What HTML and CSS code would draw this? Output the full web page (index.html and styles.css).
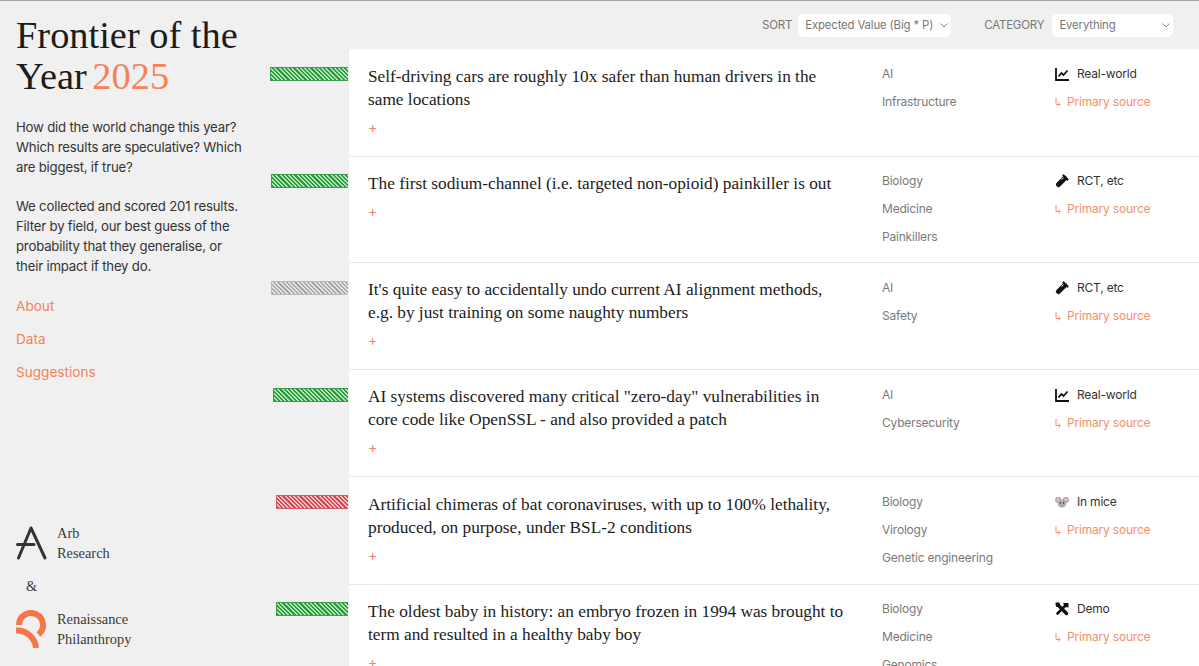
FILE: index.html
```html
<!DOCTYPE html>
<html lang="en">
<head>
    <meta charset="UTF-8">
    <meta name="viewport" content="width=device-width, initial-scale=1.0">
    <title>Frontier of the Year 2025</title>
    <link rel="stylesheet" href="styles.css">
</head>
<body>
    <div class="page">
        <aside class="sidebar">
            <h1 class="title">Frontier of the Year <span class="year">2025</span></h1>
            <p class="intro">How did the world change this year? Which results are speculative? Which are biggest, if true?</p>
            <p class="intro">We collected and scored 201 results. Filter by field, our best guess of the probability that they generalise, or their impact if they do.</p>
            <nav class="links">
                <a href="#">About</a>
                <a href="#">Data</a>
                <a href="#">Suggestions</a>
            </nav>
            <div class="credits">
                <div class="credit">
                    <svg class="logo" width="31" height="34" viewBox="0 0 31 34">
                        <path d="M2.5 32 L15 2 L29 32 M1.5 18.5 H18" fill="none" stroke="#333" stroke-width="3" stroke-linecap="round" stroke-linejoin="round"/>
                    </svg>
                    <span class="credit-name">Arb<br>Research</span>
                </div>
                <div class="amp">&amp;</div>
                <div class="credit">
                    <svg class="logo" width="31" height="38" viewBox="0 0 31 38">
                        <path d="M3 15 A12 12 0 1 1 22.5 24.4" fill="none" stroke="#f4774a" stroke-width="6"/>
                        <path d="M0 20.5 A19 19 0 0 1 20 38" fill="none" stroke="#f4774a" stroke-width="6"/>
                    </svg>
                    <span class="credit-name">Renaissance<br>Philanthropy</span>
                </div>
            </div>
        </aside>

        <main class="results">
            <div class="filters">
                <label class="filter-label">SORT</label>
                <div class="select select-sort">Expected Value (Big * P)
                    <svg class="chevron" width="8" height="5" viewBox="0 0 8 5"><path d="M.5 .5 L4 4 L7.5 .5" fill="none" stroke="#888" stroke-width="1"/></svg>
                </div>
                <label class="filter-label label-category">CATEGORY</label>
                <div class="select select-category">Everything
                    <svg class="chevron" width="8" height="5" viewBox="0 0 8 5"><path d="M.5 .5 L4 4 L7.5 .5" fill="none" stroke="#888" stroke-width="1"/></svg>
                </div>
            </div>

            <div class="row row-tall">
                <div class="bar-cell"><div class="bar bar-green" style="width: 78px"></div></div>
                <div class="row-body">
                    <div class="claim">
                        <div class="claim-text">Self-driving cars are roughly 10x safer than human drivers in the same locations</div>
                        <div class="plus">+</div>
                    </div>
                    <div class="tags"><div>AI</div><div>Infrastructure</div></div>
                    <div class="meta">
                        <div class="evidence">
                            <svg class="icon" width="14" height="14" viewBox="0 0 14 14"><path d="M1 1 V13 H14" fill="none" stroke="#111" stroke-width="1.8"/><path d="M3.5 9.5 L6.5 6 L8.5 8 L12.5 3.5" fill="none" stroke="#111" stroke-width="1.8"/></svg>
                            Real-world
                        </div>
                        <a class="source" href="#"><svg class="arrow" width="6" height="9" viewBox="0 0 6 9"><path d="M1 0 V6.5 H5 M3.2 4.5 L5.2 6.5 L3.2 8.5" fill="none" stroke="#f4906c" stroke-width="1"/></svg>Primary source</a>
                    </div>
                </div>
            </div>

            <div class="row row-short">
                <div class="bar-cell"><div class="bar bar-green" style="width: 77px"></div></div>
                <div class="row-body">
                    <div class="claim">
                        <div class="claim-text">The first sodium-channel (i.e. targeted non-opioid) painkiller is out</div>
                        <div class="plus">+</div>
                    </div>
                    <div class="tags"><div>Biology</div><div>Medicine</div><div>Painkillers</div></div>
                    <div class="meta">
                        <div class="evidence">
                            <svg class="icon" width="14" height="14" viewBox="0 0 14 14"><path d="M3.5 10.5 L9.5 4.5" stroke="#111" stroke-width="5" stroke-linecap="round"/><path d="M8.5 1.5 L12.5 5.5" stroke="#111" stroke-width="2.2" stroke-linecap="round"/><path d="M6.5 5.5 L8.5 3.8" stroke="#fff" stroke-width="1"/></svg>
                            RCT, etc
                        </div>
                        <a class="source" href="#"><svg class="arrow" width="6" height="9" viewBox="0 0 6 9"><path d="M1 0 V6.5 H5 M3.2 4.5 L5.2 6.5 L3.2 8.5" fill="none" stroke="#f4906c" stroke-width="1"/></svg>Primary source</a>
                    </div>
                </div>
            </div>

            <div class="row">
                <div class="bar-cell"><div class="bar bar-grey" style="width: 77px"></div></div>
                <div class="row-body">
                    <div class="claim">
                        <div class="claim-text">It's quite easy to accidentally undo current AI alignment methods, e.g. by just training on some naughty numbers</div>
                        <div class="plus">+</div>
                    </div>
                    <div class="tags"><div>AI</div><div>Safety</div></div>
                    <div class="meta">
                        <div class="evidence">
                            <svg class="icon" width="14" height="14" viewBox="0 0 14 14"><path d="M3.5 10.5 L9.5 4.5" stroke="#111" stroke-width="5" stroke-linecap="round"/><path d="M8.5 1.5 L12.5 5.5" stroke="#111" stroke-width="2.2" stroke-linecap="round"/><path d="M6.5 5.5 L8.5 3.8" stroke="#fff" stroke-width="1"/></svg>
                            RCT, etc
                        </div>
                        <a class="source" href="#"><svg class="arrow" width="6" height="9" viewBox="0 0 6 9"><path d="M1 0 V6.5 H5 M3.2 4.5 L5.2 6.5 L3.2 8.5" fill="none" stroke="#f4906c" stroke-width="1"/></svg>Primary source</a>
                    </div>
                </div>
            </div>

            <div class="row">
                <div class="bar-cell"><div class="bar bar-green" style="width: 75px"></div></div>
                <div class="row-body">
                    <div class="claim">
                        <div class="claim-text">AI systems discovered many critical "zero-day" vulnerabilities in core code like OpenSSL - and also provided a patch</div>
                        <div class="plus">+</div>
                    </div>
                    <div class="tags"><div>AI</div><div>Cybersecurity</div></div>
                    <div class="meta">
                        <div class="evidence">
                            <svg class="icon" width="14" height="14" viewBox="0 0 14 14"><path d="M1 1 V13 H14" fill="none" stroke="#111" stroke-width="1.8"/><path d="M3.5 9.5 L6.5 6 L8.5 8 L12.5 3.5" fill="none" stroke="#111" stroke-width="1.8"/></svg>
                            Real-world
                        </div>
                        <a class="source" href="#"><svg class="arrow" width="6" height="9" viewBox="0 0 6 9"><path d="M1 0 V6.5 H5 M3.2 4.5 L5.2 6.5 L3.2 8.5" fill="none" stroke="#f4906c" stroke-width="1"/></svg>Primary source</a>
                    </div>
                </div>
            </div>

            <div class="row row-tall">
                <div class="bar-cell"><div class="bar bar-red" style="width: 72px"></div></div>
                <div class="row-body">
                    <div class="claim">
                        <div class="claim-text">Artificial chimeras of bat coronaviruses, with up to 100% lethality, produced, on purpose, under BSL-2 conditions</div>
                        <div class="plus">+</div>
                    </div>
                    <div class="tags"><div>Biology</div><div>Virology</div><div>Genetic engineering</div></div>
                    <div class="meta">
                        <div class="evidence">
                            <svg class="icon" width="14" height="13" viewBox="0 0 14 13"><circle cx="3.2" cy="4" r="3" fill="#9a9a9e"/><circle cx="10.8" cy="4" r="3" fill="#9a9a9e"/><circle cx="3.2" cy="4" r="1.9" fill="#ecc0c4"/><circle cx="10.8" cy="4" r="1.9" fill="#ecc0c4"/><ellipse cx="7" cy="7.5" rx="4.2" ry="4" fill="#adadb2"/><circle cx="5.4" cy="7" r=".7" fill="#222"/><circle cx="8.6" cy="7" r=".7" fill="#222"/><circle cx="7" cy="10" r=".9" fill="#d98a94"/></svg>
                            In mice
                        </div>
                        <a class="source" href="#"><svg class="arrow" width="6" height="9" viewBox="0 0 6 9"><path d="M1 0 V6.5 H5 M3.2 4.5 L5.2 6.5 L3.2 8.5" fill="none" stroke="#f4906c" stroke-width="1"/></svg>Primary source</a>
                    </div>
                </div>
            </div>

            <div class="row row-short">
                <div class="bar-cell"><div class="bar bar-green" style="width: 72px"></div></div>
                <div class="row-body">
                    <div class="claim">
                        <div class="claim-text">The oldest baby in history: an embryo frozen in 1994 was brought to term and resulted in a healthy baby boy</div>
                        <div class="plus">+</div>
                    </div>
                    <div class="tags"><div>Biology</div><div>Medicine</div><div>Genomics</div></div>
                    <div class="meta">
                        <div class="evidence">
                            <svg class="icon" width="14" height="14" viewBox="0 0 14 14"><path d="M2.5 2.5 L11.5 11.5" stroke="#111" stroke-width="3.4" stroke-linecap="round"/><path d="M11.5 2.5 L2.5 11.5" stroke="#111" stroke-width="2.6" stroke-linecap="round"/><path d="M8 1 L13.5 1 L13.5 5.5 L10 5 Z M.5 .5 L4.5 .5 L5 4 L1 5 Z" fill="#111"/></svg>
                            Demo
                        </div>
                        <a class="source" href="#"><svg class="arrow" width="6" height="9" viewBox="0 0 6 9"><path d="M1 0 V6.5 H5 M3.2 4.5 L5.2 6.5 L3.2 8.5" fill="none" stroke="#f4906c" stroke-width="1"/></svg>Primary source</a>
                    </div>
                </div>
            </div>
        </main>
    </div>
</body>
</html>
```

FILE: styles.css
```css
* {
    box-sizing: border-box;
}

body, html {
    margin: 0;
    padding: 0;
    height: 100%;
    overflow: hidden;
}

body {
    background-color: #f0f0f0;
    border-top: 1px solid #a3a3a3;
    font-family: "Inter", "Liberation Sans", sans-serif;
    color: #333;
}

a {
    text-decoration: none;
    color: #f4825a;
}

.page {
    display: flex;
    align-items: flex-start;
}

/* left column */
.sidebar {
    width: 270px;
    flex-shrink: 0;
    height: 665px;
    padding: 14px 20px 0 16px;
    display: flex;
    flex-direction: column;
}

.title {
    margin: 0 0 20px 0;
    font-family: "Liberation Serif", serif;
    font-weight: 400;
    font-size: 38.4px;
    line-height: 41px;
    color: #1c1c1c;
}

.year {
    margin-left: -4px;
    color: #f4825a;
}

.intro {
    margin: 0 0 19px 0;
    font-size: 13.2px;
    letter-spacing: -.2px;
    line-height: 20px;
}

.links {
    display: flex;
    flex-direction: column;
    gap: 14px;
    margin-top: 2px;
    font-size: 13.6px;
    line-height: 19px;
}

.credits {
    margin-top: auto;
    padding-bottom: 17px;
    font-family: "Liberation Serif", serif;
    font-size: 14.4px;
    line-height: 20px;
    color: #3b3b3b;
}

.credit {
    display: flex;
    align-items: center;
    gap: 10px;
}

.amp {
    margin: 13px 0 13px 10px;
}

/* filter bar */
.results {
    flex: 1;
    min-width: 0;
}

.filters {
    height: 48px;
    display: flex;
    align-items: center;
    padding-left: 492px;
    font-size: 11.5px;
    letter-spacing: -.2px;
    color: #777;
}

.filter-label {
    margin-right: 6px;
}

.label-category {
    margin: 0 8px 0 33px;
}

.select {
    height: 23px;
    display: flex;
    align-items: center;
    justify-content: space-between;
    padding: 0 3px 0 7px;
    background-color: #fff;
    border-radius: 5px;
    white-space: nowrap;
    font-size: 11.4px;
    letter-spacing: -.15px;
}

.select-sort {
    width: 153px;
}

.select-category {
    width: 121px;
}

/* result rows */
.row {
    display: flex;
}

.bar-cell {
    width: 79px;
    flex-shrink: 0;
    padding: 18px 1px 0 0;
    display: flex;
    justify-content: flex-end;
}

.bar {
    height: 14px;
    border-style: solid;
    border-width: 1px 0 1px 1px;
}

.bar-green {
    border-color: #3c9c4c;
    background: repeating-linear-gradient(45deg, #2b9a3f 0 1.5px, #b6e6b6 1.5px 3px);
}

.bar-grey {
    border-color: #bdbaba;
    background: repeating-linear-gradient(45deg, #aaa6a6 0 1.5px, #e8e6e6 1.5px 3px);
}

.bar-red {
    border-color: #cf5c66;
    background: repeating-linear-gradient(45deg, #cf4a55 0 1.5px, #f6c5c8 1.5px 3px);
}

.row-body {
    flex: 1;
    min-height: 107px;
    display: flex;
    background-color: #fff;
    border-bottom: 1px solid #e8e8e8;
}

.claim {
    width: 533px;
    padding: 15px 35px 0 19px;
    flex-shrink: 0;
}

.claim-text {
    font-family: "Liberation Serif", serif;
    font-size: 17.3px;
    line-height: 23px;
    color: #1c1c1c;
}

.plus {
    margin-top: 6.5px;
    font-size: 14px;
    line-height: 18px;
    color: #f4825a;
}

.tags {
    width: 173px;
    flex-shrink: 0;
    padding-top: 15px;
    font-size: 12px;
    letter-spacing: -.2px;
    line-height: 20px;
    color: #7a7a7a;
}

.tags div {
    margin-bottom: 8px;
}

.meta {
    padding-top: 15px;
    font-size: 12px;
    letter-spacing: -.2px;
    line-height: 20px;
}

.row-tall .row-body {
    min-height: 108px;
}

.row-tall .claim {
    padding-top: 16px;
}

.row-short .row-body {
    min-height: 106px;
}

.row-short .bar-cell {
    padding-top: 17px;
}

.row-short .tags, .row-short .meta {
    padding-top: 14px;
}

.evidence {
    display: flex;
    align-items: center;
    gap: 8px;
    color: #333;
    margin-bottom: 8px;
}

.source {
    display: flex;
    align-items: center;
    color: #f4906c;
}

.arrow {
    margin-right: 6px;
}
```
